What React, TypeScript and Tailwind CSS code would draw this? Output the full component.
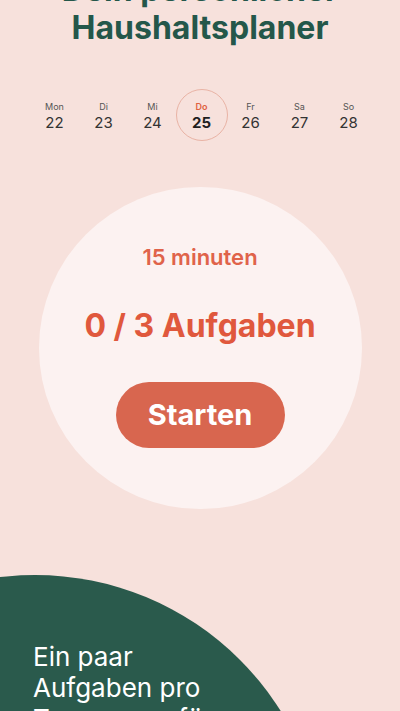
import React from 'react';

const days = [
  { label: 'Mon', date: 22 },
  { label: 'Di', date: 23 },
  { label: 'Mi', date: 24 },
  { label: 'Do', date: 25, active: true },
  { label: 'Fr', date: 26 },
  { label: 'Sa', date: 27 },
  { label: 'So', date: 28 },
];

const App: React.FC = () => {
  return (
    <div className="h-[711px] w-full overflow-hidden bg-[#f7e1dc] font-['Inter',sans-serif]">
      {/* Title (page is scrolled a little) */}
      <h1 className="mt-[-29px] text-center text-[32px] font-bold leading-[38px] text-[#24574a]">
        Dein persönlicher
        <br />
        Haushaltsplaner
      </h1>

      {/* Week strip */}
      <div className="mt-[42px] flex justify-center pl-[3px]">
        {days.map(day => (
          <div key={day.date} className="flex w-[49px] justify-center">
            <div
              className={`flex h-[52px] w-[52px] shrink-0 flex-col items-center justify-center rounded-full pt-[3px] ${
                day.active ? 'border border-[#e9b3a5]' : 'border border-transparent'
              }`}
            >
              <span
                className={`text-[9px] leading-[12px] ${
                  day.active ? 'font-semibold text-[#e0603f]' : 'text-[#555]'
                }`}
              >
                {day.label}
              </span>
              <span
                className={`mt-[1px] text-[15px] leading-[18px] ${
                  day.active ? 'font-bold text-[#1f1f1f]' : 'text-[#333]'
                }`}
              >
                {day.date}
              </span>
            </div>
          </div>
        ))}
      </div>

      {/* Daily task circle */}
      <div className="mt-[46px] flex justify-center">
        <div className="flex h-[322px] w-[323px] flex-col items-center rounded-full bg-[#fcf2f1]">
          <div className="mt-[56px] text-[22px] font-semibold leading-[28px] text-[#e0634a]">
            15 minuten
          </div>
          <div className="mt-[36px] text-[32px] font-bold leading-[38px] text-[#e0583d]">
            0 / 3 Aufgaben
          </div>
          <button className="mt-[37px] flex h-[66px] w-[169px] items-center justify-center rounded-full bg-[#d8664f] text-[29px] font-bold text-white">
            Starten
          </button>
        </div>
      </div>

      {/* Green info blob */}
      <div className="ml-[-255px] mt-[66px] h-[580px] w-[580px] rounded-full bg-[#2a5a4c] pl-[288px] pt-[66px]">
        <p className="w-[200px] text-[26px] leading-[31px] text-white">
          Ein paar Aufgaben pro Tag sorgen für ein gemütliches Zuhause.
        </p>
      </div>
    </div>
  );
};

export default App;
